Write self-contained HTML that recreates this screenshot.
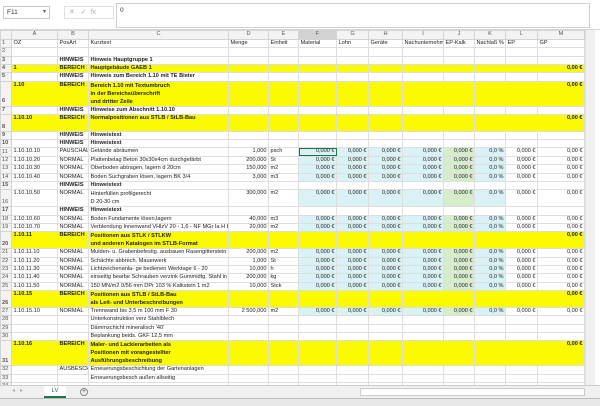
<!DOCTYPE html>
<html><head><meta charset="utf-8">
<style>
*{box-sizing:border-box;margin:0;padding:0}
body{width:600px;height:406px;overflow:hidden;background:#fff;font-family:"Liberation Sans",sans-serif;position:relative}
.top{position:absolute;left:0;top:0;width:600px;height:30px;background:#fff;border-bottom:1px solid #d6d6d6}
.nb{position:absolute;left:3px;top:6px;width:47px;height:13px;border:1px solid #c8c8c8;font-size:6.5px;line-height:11px;padding-left:3px;color:#333}
.nb:after{content:"▾";position:absolute;right:3px;top:0;font-size:6px;color:#555}
.fb{position:absolute;left:64px;top:6px;width:50px;height:13px;border:1px solid #e0e0e0;font-size:7px;color:#aaa;line-height:11px}
.fi{position:absolute;left:116px;top:3px;width:474px;height:25px;border:1px solid #d0d0d0;font-size:6.5px;padding:3px 3px;color:#333}
table{position:absolute;left:0;top:30px;border-collapse:collapse;table-layout:fixed;width:584px;font-size:5.6px;color:#222}
td{border:1px solid #dedede;padding:0 1.5px;white-space:nowrap;overflow:hidden;vertical-align:top;line-height:7.3px}
td.m{line-height:8px}
tr.h td{background:#f3f3f3;text-align:center;color:#555;height:9px;line-height:7px;border-color:#d4d4d4}
td.n{background:#f3f3f3;color:#555;vertical-align:bottom;text-align:left;padding-left:1px;border-color:#d4d4d4}
tr.y td{background:#fafa00}
tr.y td.n{background:#f3f3f3}
.b{font-weight:bold}
.r{text-align:right}
td.c{background:#d8f2f6}
td.g{background:#d6edcc}
.sel{outline:1.5px solid #217346;outline-offset:-1px}
.vs{position:absolute;left:585px;top:30px;width:10px;height:355px;background:#f0f0f0;border-left:1px solid #ddd}
.tabs{position:absolute;left:0;top:385px;width:600px;height:13px;background:#f0f0f0;border-top:1px solid #ccc}
.lv{position:absolute;left:44px;top:0;width:22px;height:12px;background:#fff;border-bottom:2px solid #217346;font-size:6px;color:#217346;text-align:center;line-height:11px}
.plus{position:absolute;left:80px;top:2px;width:8px;height:8px;border:1px solid #888;border-radius:50%;font-size:6px;line-height:6px;text-align:center;color:#555}
.hs{position:absolute;left:360px;top:2px;width:225px;height:8px;background:#fff;border:1px solid #ccc}
.bot{position:absolute;left:0;top:398px;width:600px;height:8px;background:#e8e8e8;border-top:1px solid #bbb}
</style></head><body>
<div class="top">
<div class="nb">F11</div>
<div class="fb">&nbsp;&nbsp;✕&nbsp;&nbsp;&nbsp;✓&nbsp;&nbsp;<i>f</i>x</div>
<div class="fi">0</div>
</div>
<table>
<colgroup><col style="width:11px"><col style="width:46px"><col style="width:31px"><col style="width:140px"><col style="width:40px"><col style="width:30px"><col style="width:38px"><col style="width:32px"><col style="width:34px"><col style="width:41px"><col style="width:31px"><col style="width:31px"><col style="width:32px"><col style="width:47px"></colgroup>
<tr class="h"><td></td><td>A</td><td>B</td><td>C</td><td>D</td><td>E</td><td style="background:#d2d2d2">F</td><td>G</td><td>H</td><td>I</td><td>J</td><td>K</td><td>L</td><td>M</td></tr>
<tr style="height:8.35px"><td class="n">1</td><td>OZ</td><td>PosArt</td><td>Kurztext</td><td>Menge</td><td>Einheit</td><td>Material</td><td>Lohn</td><td>Geräte</td><td>Nachunternehm</td><td>EP-Kalk</td><td>Nachlaß %</td><td>EP</td><td>GP</td></tr>
<tr style="height:8.35px"><td class="n">2</td><td></td><td></td><td></td><td></td><td></td><td></td><td></td><td></td><td></td><td></td><td></td><td></td><td></td></tr>
<tr style="height:8.35px" class="b"><td class="n">3</td><td></td><td>HINWEIS</td><td>Hinweis Hauptgruppe 1</td><td></td><td></td><td></td><td></td><td></td><td></td><td></td><td></td><td></td><td></td></tr>
<tr style="height:8.35px" class="y b"><td class="n">4</td><td>1</td><td>BEREICH</td><td>Hauptgebäude GAEB 1</td><td></td><td></td><td></td><td></td><td></td><td></td><td></td><td></td><td></td><td class="r">0,00 €</td></tr>
<tr style="height:8.35px" class="b"><td class="n">5</td><td></td><td>HINWEIS</td><td>Hinweis zum Bereich 1.10 mit TE Bieter</td><td></td><td></td><td></td><td></td><td></td><td></td><td></td><td></td><td></td><td></td></tr>
<tr style="height:25.05px" class="y b"><td class="n">6</td><td>1.10</td><td>BEREICH</td><td class="m">Bereich 1.10 mit Textumbruch<br>in der Bereichsüberschrift<br>und dritter Zeile</td><td></td><td></td><td></td><td></td><td></td><td></td><td></td><td></td><td></td><td class="r">0,00 €</td></tr>
<tr style="height:8.35px" class="b"><td class="n">7</td><td></td><td>HINWEIS</td><td>Hinweise zum Abschnitt 1.10.10</td><td></td><td></td><td></td><td></td><td></td><td></td><td></td><td></td><td></td><td></td></tr>
<tr style="height:16.7px" class="y b"><td class="n">8</td><td>1.10.10</td><td>BEREICH</td><td>Normalpositionen aus STLB / StLB-Bau</td><td></td><td></td><td></td><td></td><td></td><td></td><td></td><td></td><td></td><td class="r">0,00 €</td></tr>
<tr style="height:8.35px" class="b"><td class="n">9</td><td></td><td>HINWEIS</td><td>Hinweistext</td><td></td><td></td><td></td><td></td><td></td><td></td><td></td><td></td><td></td><td></td></tr>
<tr style="height:8.35px" class="b"><td class="n">10</td><td></td><td>HINWEIS</td><td>Hinweistext</td><td></td><td></td><td></td><td></td><td></td><td></td><td></td><td></td><td></td><td></td></tr>
<tr style="height:8.35px"><td class="n">11</td><td>1.10.10.10</td><td>PAUSCHAL</td><td>Gelände abräumen</td><td class="r">1,000</td><td>psch</td><td class="c r sel">0,000 €</td><td class="c r">0,000 €</td><td class="c r">0,000 €</td><td class="c r">0,000 €</td><td class="g r">0,000 €</td><td class="c r">0,0 %</td><td class="r">0,000 €</td><td class="r">0,00 €</td></tr>
<tr style="height:8.35px"><td class="n">12</td><td>1.10.10.20</td><td>NORMAL</td><td>Plattenbelag Beton 30x30x4cm durchgefärbt</td><td class="r">200,000</td><td>St</td><td class="c r">0,000 €</td><td class="c r">0,000 €</td><td class="c r">0,000 €</td><td class="c r">0,000 €</td><td class="g r">0,000 €</td><td class="c r">0,0 %</td><td class="r">0,000 €</td><td class="r">0,00 €</td></tr>
<tr style="height:8.35px"><td class="n">13</td><td>1.10.10.30</td><td>NORMAL</td><td>Oberboden abtragen, lagern d 20cm</td><td class="r">150,000</td><td>m2</td><td class="c r">0,000 €</td><td class="c r">0,000 €</td><td class="c r">0,000 €</td><td class="c r">0,000 €</td><td class="g r">0,000 €</td><td class="c r">0,0 %</td><td class="r">0,000 €</td><td class="r">0,00 €</td></tr>
<tr style="height:8.35px"><td class="n">14</td><td>1.10.10.40</td><td>NORMAL</td><td>Boden Suchgraben lösen, lagern BK 3/4</td><td class="r">3,000</td><td>m3</td><td class="c r">0,000 €</td><td class="c r">0,000 €</td><td class="c r">0,000 €</td><td class="c r">0,000 €</td><td class="g r">0,000 €</td><td class="c r">0,0 %</td><td class="r">0,000 €</td><td class="r">0,00 €</td></tr>
<tr style="height:8.35px" class="b"><td class="n">15</td><td></td><td>HINWEIS</td><td>Hinweistext</td><td></td><td></td><td></td><td></td><td></td><td></td><td></td><td></td><td></td><td></td></tr>
<tr style="height:16.7px"><td class="n">16</td><td>1.10.10.50</td><td>NORMAL</td><td class="m">Hinterfüllen profilgerecht<br>D 20-30 cm</td><td class="r">300,000</td><td>m2</td><td class="c r">0,000 €</td><td class="c r">0,000 €</td><td class="c r">0,000 €</td><td class="c r">0,000 €</td><td class="g r">0,000 €</td><td class="c r">0,0 %</td><td class="r">0,000 €</td><td class="r">0,00 €</td></tr>
<tr style="height:8.35px" class="b"><td class="n">17</td><td></td><td>HINWEIS</td><td>Hinweistext</td><td></td><td></td><td></td><td></td><td></td><td></td><td></td><td></td><td></td><td></td></tr>
<tr style="height:8.35px"><td class="n">18</td><td>1.10.10.60</td><td>NORMAL</td><td>Boden Fundamente lösen,lagern</td><td class="r">40,000</td><td>m3</td><td class="c r">0,000 €</td><td class="c r">0,000 €</td><td class="c r">0,000 €</td><td class="c r">0,000 €</td><td class="g r">0,000 €</td><td class="c r">0,0 %</td><td class="r">0,000 €</td><td class="r">0,00 €</td></tr>
<tr style="height:8.35px"><td class="n">19</td><td>1.10.10.70</td><td>NORMAL</td><td>Verblendung Innenwand VHlzV 20 - 1,6 - NF MGr Ia H bis</td><td class="r">20,000</td><td>m2</td><td class="c r">0,000 €</td><td class="c r">0,000 €</td><td class="c r">0,000 €</td><td class="c r">0,000 €</td><td class="g r">0,000 €</td><td class="c r">0,0 %</td><td class="r">0,000 €</td><td class="r">0,00 €</td></tr>
<tr style="height:16.7px" class="y b"><td class="n">20</td><td>1.10.11</td><td>BEREICH</td><td class="m">Positionen aus STLK / STLKW<br>und anderen Katalogen im STLB-Format</td><td></td><td></td><td></td><td></td><td></td><td></td><td></td><td></td><td></td><td class="r">0,00 €</td></tr>
<tr style="height:8.35px"><td class="n">21</td><td>1.10.11.10</td><td>NORMAL</td><td>Mulden- u. Grabenbefestig. ausbauen Rasengitterstein</td><td class="r">200,000</td><td>m2</td><td class="c r">0,000 €</td><td class="c r">0,000 €</td><td class="c r">0,000 €</td><td class="c r">0,000 €</td><td class="g r">0,000 €</td><td class="c r">0,0 %</td><td class="r">0,000 €</td><td class="r">0,00 €</td></tr>
<tr style="height:8.35px"><td class="n">22</td><td>1.10.11.20</td><td>NORMAL</td><td>Schächte abbrech. Mauerwerk</td><td class="r">1,000</td><td>St</td><td class="c r">0,000 €</td><td class="c r">0,000 €</td><td class="c r">0,000 €</td><td class="c r">0,000 €</td><td class="g r">0,000 €</td><td class="c r">0,0 %</td><td class="r">0,000 €</td><td class="r">0,00 €</td></tr>
<tr style="height:8.35px"><td class="n">23</td><td>1.10.11.30</td><td>NORMAL</td><td>Lichtzeichenanla- ge bedienen Werktage 6 - 20</td><td class="r">10,000</td><td>h</td><td class="c r">0,000 €</td><td class="c r">0,000 €</td><td class="c r">0,000 €</td><td class="c r">0,000 €</td><td class="g r">0,000 €</td><td class="c r">0,0 %</td><td class="r">0,000 €</td><td class="r">0,00 €</td></tr>
<tr style="height:8.35px"><td class="n">24</td><td>1.10.11.40</td><td>NORMAL</td><td>einseitig bearbe Schrauben verzink Gummidtg. Stahl in</td><td class="r">200,000</td><td>kg</td><td class="c r">0,000 €</td><td class="c r">0,000 €</td><td class="c r">0,000 €</td><td class="c r">0,000 €</td><td class="g r">0,000 €</td><td class="c r">0,0 %</td><td class="r">0,000 €</td><td class="r">0,00 €</td></tr>
<tr style="height:8.35px"><td class="n">25</td><td>1.10.11.50</td><td>NORMAL</td><td>150 MN/m2 0/56 mm DPr 103 % Kalkstein 1 m2</td><td class="r">10,000</td><td>Stck</td><td class="c r">0,000 €</td><td class="c r">0,000 €</td><td class="c r">0,000 €</td><td class="c r">0,000 €</td><td class="g r">0,000 €</td><td class="c r">0,0 %</td><td class="r">0,000 €</td><td class="r">0,00 €</td></tr>
<tr style="height:16.7px" class="y b"><td class="n">26</td><td>1.10.15</td><td>BEREICH</td><td class="m">Positionen aus STLB / StLB-Bau<br>als Leit- und Unterbeschreibungen</td><td></td><td></td><td></td><td></td><td></td><td></td><td></td><td></td><td></td><td class="r">0,00 €</td></tr>
<tr style="height:8.35px"><td class="n">27</td><td>1.10.15.10</td><td>NORMAL</td><td>Trennwand bis 3,5 m 100 mm F 30</td><td class="r">2 500,000</td><td>m2</td><td class="c r">0,000 €</td><td class="c r">0,000 €</td><td class="c r">0,000 €</td><td class="c r">0,000 €</td><td class="g r">0,000 €</td><td class="c r">0,0 %</td><td class="r">0,000 €</td><td class="r">0,00 €</td></tr>
<tr style="height:8.35px"><td class="n">28</td><td></td><td></td><td>Unterkonstruktion verz Stahlblech</td><td></td><td></td><td></td><td></td><td></td><td></td><td></td><td></td><td></td><td></td></tr>
<tr style="height:8.35px"><td class="n">29</td><td></td><td></td><td>Dämmschicht mineralisch '40'</td><td></td><td></td><td></td><td></td><td></td><td></td><td></td><td></td><td></td><td></td></tr>
<tr style="height:8.35px"><td class="n">30</td><td></td><td></td><td>Beplankung beids. GKF 12,5 mm</td><td></td><td></td><td></td><td></td><td></td><td></td><td></td><td></td><td></td><td></td></tr>
<tr style="height:25.05px" class="y b"><td class="n">31</td><td>1.10.16</td><td>BEREICH</td><td class="m">Maler- und Lackierarbeiten als<br>Positionen mit vorangestellter<br>Ausführungsbeschreibung</td><td></td><td></td><td></td><td></td><td></td><td></td><td></td><td></td><td></td><td class="r">0,00 €</td></tr>
<tr style="height:8.35px"><td class="n">32</td><td></td><td>AUSBESCHR</td><td>Erneuerungsbeschichtung der Gartenanlagen</td><td></td><td></td><td></td><td></td><td></td><td></td><td></td><td></td><td></td><td></td></tr>
<tr style="height:8.35px"><td class="n">33</td><td></td><td></td><td>Erneuerungsbesch außen allseitig</td><td></td><td></td><td></td><td></td><td></td><td></td><td></td><td></td><td></td><td></td></tr>
<tr style="height:8.35px"><td class="n">34</td><td></td><td></td><td></td><td></td><td></td><td></td><td></td><td></td><td></td><td></td><td></td><td></td><td></td></tr>
</table>
<div class="vs"></div>
<div class="tabs"><span style="position:absolute;left:12px;top:1px;font-size:6px;color:#aaa">◂&nbsp;&nbsp;&nbsp;▸</span><div class="lv">LV</div><div class="plus">+</div><div class="hs"></div></div>
<div class="bot"></div>
</body></html>
